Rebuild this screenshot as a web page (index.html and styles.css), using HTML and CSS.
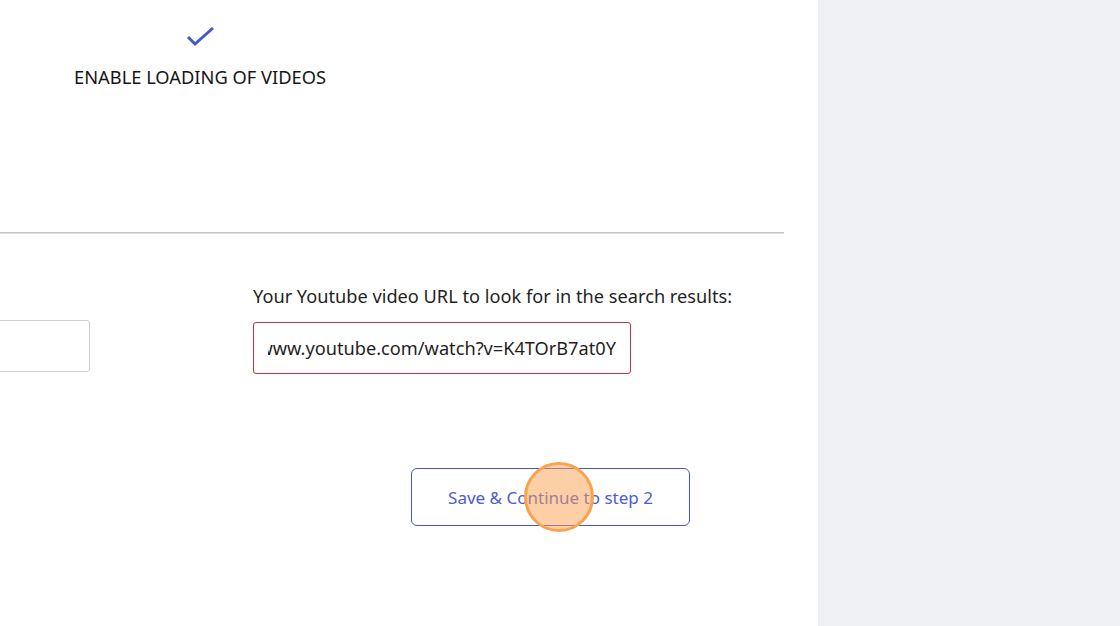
FILE: index.html
```html
<!DOCTYPE html>
<html lang="en">
<head>
    <meta charset="UTF-8">
    <meta name="viewport" content="width=device-width, initial-scale=1.0">
    <title>Video settings - step 1</title>
    <link rel="stylesheet" href="styles.css">
</head>
<body>
    <div class="page">
        <main class="main">
            <section class="option">
                <div class="option-box">
                    <svg class="check" width="30" height="22" viewBox="0 0 30 22">
                        <path d="M2 11 L9 18 L27 2" fill="none" stroke="#4257d6" stroke-width="3"/>
                    </svg>
                    <div class="option-label">ENABLE LOADING OF VIDEOS</div>
                </div>
            </section>

            <hr class="divider">

            <section class="form-row">
                <div class="field-left">
                    <div class="input-box"></div>
                </div>
                <div class="field">
                    <label class="field-label">Your Youtube video URL to look for in the search results:</label>
                    <div class="input-box error">
                        <div class="input-text">
                            <span>https://www.youtube.com/watch?v=K4TOrB7at0Y</span>
                        </div>
                    </div>
                </div>
            </section>

            <div class="actions">
                <button class="btn">Save &amp; Continue to step 2</button>
            </div>
        </main>
        <aside class="sidebar"></aside>
        <span class="cursor"></span>
    </div>
</body>
</html>
```

FILE: styles.css
```css
html, body {
    margin: 0;
    height: 100%;
}
body {
    font-family: "Noto Sans", "Open Sans", sans-serif;
    color: #1f1f1f;
    background: #fff;
}
.page {
    position: relative;
    display: flex;
    height: 626px;
    overflow: hidden;
}
.main {
    width: 818px;
    padding-right: 34px;
    box-sizing: border-box;
}
.sidebar {
    flex: 1;
    background-color: #eff0f4;
}
.option {
    height: 232px;
}
.option-box {
    width: 400px;
    display: flex;
    flex-direction: column;
    align-items: center;
    padding-top: 26px;
}
.check {
    display: block;
    margin-left: 2px;
}
.option-label {
    margin-top: 16px;
    font-size: 18.3px;
    color: #161616;
}
.divider {
    margin: 0;
    border: 0;
    border-top: 1px solid #c6c6c6;
    border-bottom: 1px solid #dcdcdc;
}
.form-row {
    display: flex;
    align-items: flex-start;
    padding-top: 50px;
}
.field-left {
    width: 290px;
    margin-left: -200px;
    margin-right: 163px;
    padding-top: 36px;
}
.field-left .input-box {
    height: 52px;
}
.field-label {
    display: block;
    font-size: 18.2px;
    margin-bottom: 14px;
}
.input-box {
    box-sizing: border-box;
    height: 52px;
    border: 1px solid #cfcfcf;
    border-radius: 3px;
    background: #fff;
}
.input-box.error {
    width: 378px;
    border: 1.5px solid #c8303f;
    padding: 0 14px;
    display: flex;
    align-items: center;
}
.input-text {
    width: 100%;
    overflow: hidden;
    display: flex;
    justify-content: flex-end;
    white-space: nowrap;
    font-size: 18.2px;
    color: #1f1f1f;
}
.actions {
    padding-top: 94px;
    padding-left: 411px;
}
.btn {
    width: 279px;
    height: 58px;
    box-sizing: border-box;
    background: #fff;
    border: 1.5px solid #4456cf;
    border-radius: 6px;
    color: #4a5bd6;
    font-family: inherit;
    font-size: 17px;
    cursor: pointer;
}
.cursor {
    position: absolute;
    left: 524px;
    top: 462px;
    width: 70px;
    height: 70px;
    box-sizing: border-box;
    border-radius: 50%;
    border: 3px solid #f9a34f;
    background: rgba(252, 160, 80, 0.5);
}
```
